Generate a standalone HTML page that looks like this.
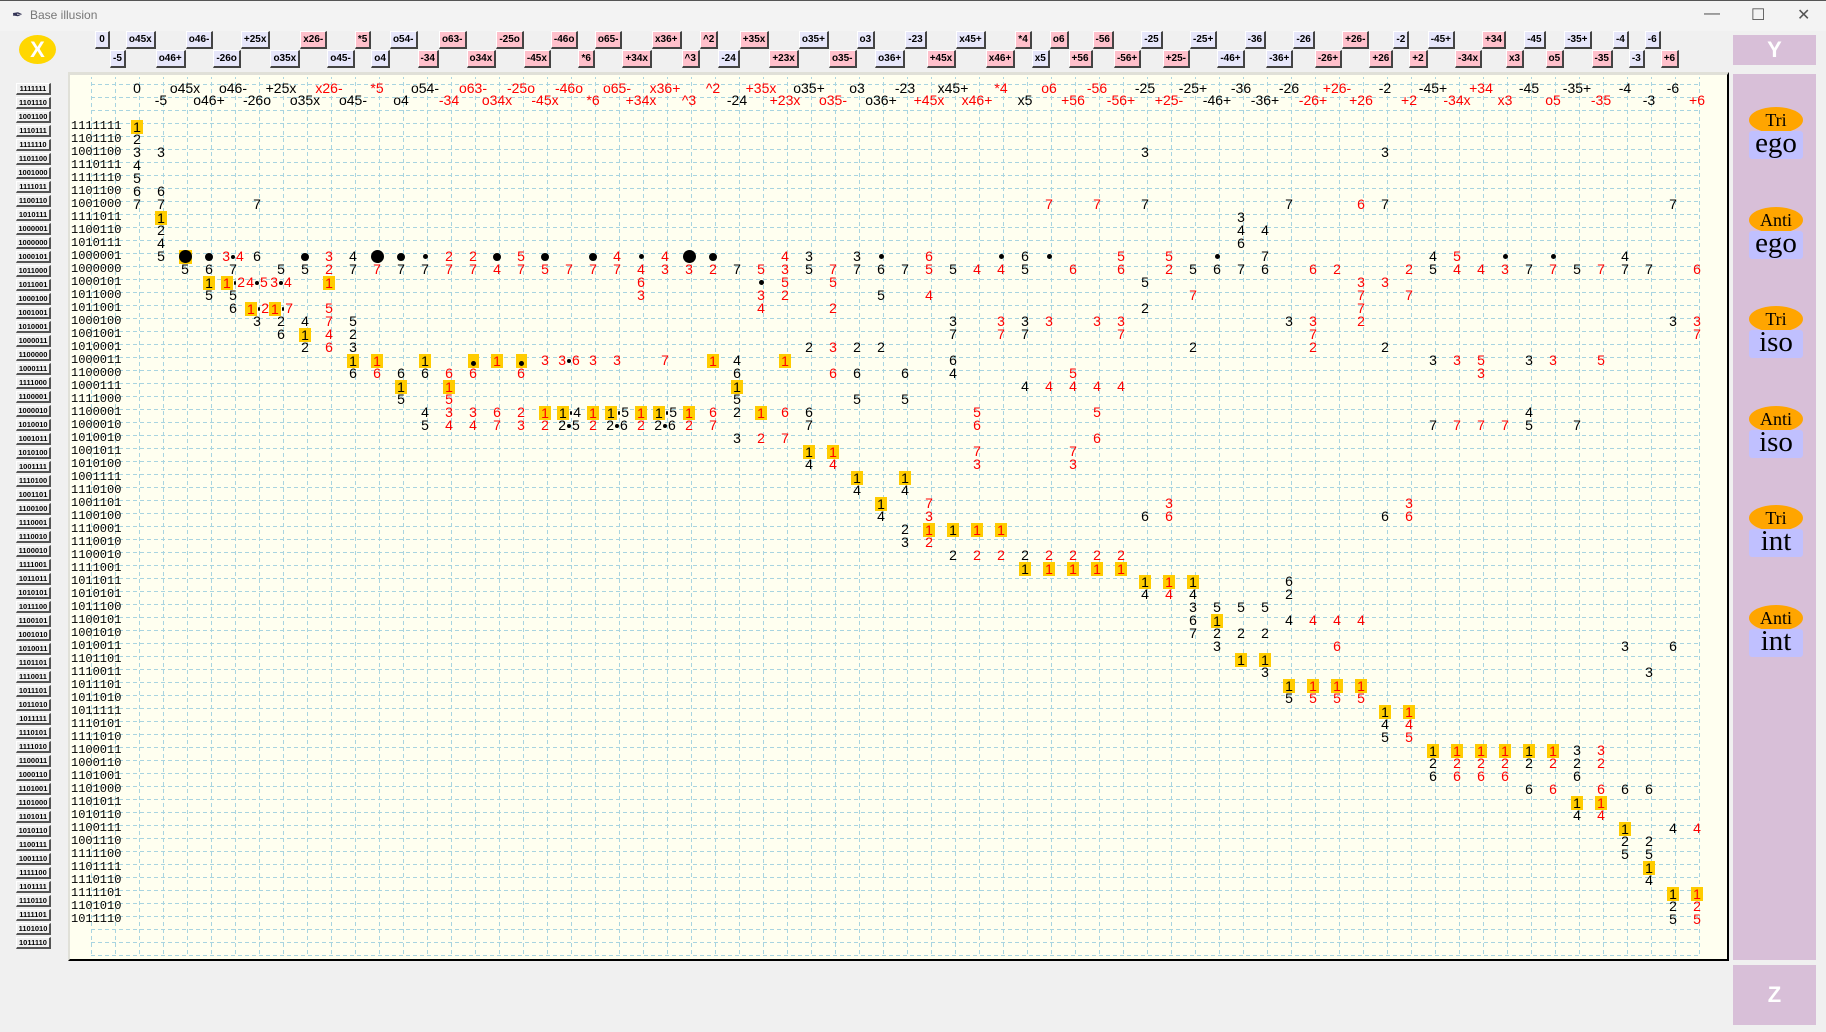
<!DOCTYPE html>
<html><head><meta charset="utf-8"><style>
*{margin:0;padding:0;box-sizing:border-box}
body{width:1826px;height:1032px;background:#f0f0f0;font-family:"Liberation Sans",sans-serif;position:relative;overflow:hidden}
#tb{position:absolute;left:0;top:0;width:1826px;height:31px;background:#f3f3f3;border-top:1px solid #555}
#tb .t{position:absolute;left:30px;top:7px;font-size:12px;color:#777}
#tb .c{position:absolute;top:4px;font-size:16px;color:#555}
#xb{position:absolute;left:19px;top:35px;width:37px;height:29px;border-radius:50%;background:#ffd700;color:#fff;font-weight:bold;font-size:22px;text-align:center;line-height:29px}
#btns{position:absolute;left:95px;top:31px;display:flex;align-items:flex-start}
#btns span{display:block;height:18px;font-size:10px;font-weight:bold;line-height:16px;padding:0 2px;background:#e6e6fa;border:1px solid #fff;border-right:2px solid #444;border-bottom:2px solid #444;white-space:nowrap;min-width:15px;text-align:center}
#btns span.p{background:#ffc0cb}
#btns span:nth-child(even){margin-top:19px}
#lb{position:absolute;left:16px;top:83px}
#lb div{width:35px;height:12px;margin-bottom:2px;font-size:7.5px;font-weight:bold;line-height:10px;text-align:center;background:#f0f0f0;border:1px solid #fff;border-right:2px solid #555;border-bottom:2px solid #555}
#cv{position:absolute;left:68px;top:72px;width:1661px;height:889px;background:#fffff0;border-top:3px solid #e0e0d8;border-left:2px solid #e0e0d8;border-right:2px solid #000;border-bottom:2px solid #000;overflow:hidden}
#cv svg{position:absolute;left:0;top:0}
#rl{position:absolute;left:71px;top:120px;font-family:"Liberation Mono",monospace;font-size:12px;line-height:13px;color:#000}
.g{position:absolute;left:125px;top:120px;display:grid;grid-template-columns:repeat(66,24px);grid-template-rows:repeat(62,13px);font-size:14px;line-height:13px}
.g b{font-weight:normal;display:flex;align-items:center;justify-content:center;white-space:nowrap;color:#000}
.g b.r,.hd .r{color:#f00}
.g s{text-decoration:none;background:#ffcc00;display:inline-block;padding:0 2px;line-height:14px;height:14px}
.g i{display:inline-block;width:8px;height:8px;border-radius:50%;background:#000}
.g i.b{width:13px;height:13px}
.g i.s{width:5px;height:5px}
.g i.t{width:4px;height:4px;margin:0 1px;vertical-align:middle}
.hd{position:absolute;left:125px;top:82px;display:grid;grid-template-columns:repeat(66,24px);grid-template-rows:12px 12px;font-size:14px;line-height:12px}
.hd b{font-weight:normal;display:flex;justify-content:center;white-space:nowrap;overflow:visible;width:24px}
#rp{position:absolute;left:1733px;top:74px;width:83px;height:886px;background:#d8bfd8}
#yb,#zb{position:absolute;left:1733px;width:83px;background:#d8bfd8;color:#fff;font-weight:bold;font-size:22px;text-align:center}
#yb{top:35px;height:30px;line-height:30px}
#zb{top:965px;height:60px;line-height:60px}
.og{position:absolute;left:1749px;width:54px}
.og .e{height:26px;border-radius:50%;background:#ffa500;font-family:"Liberation Serif",serif;font-size:18px;text-align:center;line-height:26px}
.og .w{height:28px;margin-top:-2px;background:#c0c0ff;border-radius:3px;font-family:"Liberation Serif",serif;font-size:29px;text-align:center;line-height:24px}
</style></head><body>
<div id="tb"><span style="position:absolute;left:12px;top:6px;font-size:13px;color:#335">&#10002;</span><span class="t">Base illusion</span><span class="c" style="left:1704px">&#8212;</span><span class="c" style="left:1751px">&#9744;</span><span class="c" style="left:1797px">&#10005;</span></div>
<div id="xb">X</div>
<div id="btns"><span>0</span><span>-5</span><span>o45x</span><span>o46+</span><span>o46-</span><span>-26o</span><span>+25x</span><span>o35x</span><span class="p">x26-</span><span>o45-</span><span class="p">*5</span><span>o4</span><span>o54-</span><span class="p">-34</span><span class="p">o63-</span><span class="p">o34x</span><span class="p">-25o</span><span class="p">-45x</span><span class="p">-46o</span><span class="p">*6</span><span class="p">o65-</span><span class="p">+34x</span><span class="p">x36+</span><span class="p">^3</span><span class="p">^2</span><span>-24</span><span class="p">+35x</span><span class="p">+23x</span><span>o35+</span><span class="p">o35-</span><span>o3</span><span>o36+</span><span>-23</span><span class="p">+45x</span><span>x45+</span><span class="p">x46+</span><span class="p">*4</span><span>x5</span><span class="p">o6</span><span class="p">+56</span><span class="p">-56</span><span class="p">-56+</span><span>-25</span><span class="p">+25-</span><span>-25+</span><span>-46+</span><span>-36</span><span>-36+</span><span>-26</span><span class="p">-26+</span><span class="p">+26-</span><span class="p">+26</span><span>-2</span><span class="p">+2</span><span>-45+</span><span class="p">-34x</span><span class="p">+34</span><span class="p">x3</span><span>-45</span><span class="p">o5</span><span>-35+</span><span class="p">-35</span><span>-4</span><span>-3</span><span>-6</span><span class="p">+6</span></div>
<div id="lb"><div>1111111</div><div>1101110</div><div>1001100</div><div>1110111</div><div>1111110</div><div>1101100</div><div>1001000</div><div>1111011</div><div>1100110</div><div>1010111</div><div>1000001</div><div>1000000</div><div>1000101</div><div>1011000</div><div>1011001</div><div>1000100</div><div>1001001</div><div>1010001</div><div>1000011</div><div>1100000</div><div>1000111</div><div>1111000</div><div>1100001</div><div>1000010</div><div>1010010</div><div>1001011</div><div>1010100</div><div>1001111</div><div>1110100</div><div>1001101</div><div>1100100</div><div>1110001</div><div>1110010</div><div>1100010</div><div>1111001</div><div>1011011</div><div>1010101</div><div>1011100</div><div>1100101</div><div>1001010</div><div>1010011</div><div>1101101</div><div>1110011</div><div>1011101</div><div>1011010</div><div>1011111</div><div>1110101</div><div>1111010</div><div>1100011</div><div>1000110</div><div>1101001</div><div>1101000</div><div>1101011</div><div>1010110</div><div>1100111</div><div>1001110</div><div>1111100</div><div>1101111</div><div>1110110</div><div>1111101</div><div>1101010</div><div>1011110</div></div>
<div id="cv"><svg width="1661" height="889"><defs>
<pattern id="pv" x="-3" y="0" width="24" height="889" patternUnits="userSpaceOnUse"><line x1="0.5" y1="0" x2="0.5" y2="889" stroke="#a8d4e0" stroke-dasharray="4 3"/></pattern>
<pattern id="ph" x="0" y="-4" width="1661" height="13" patternUnits="userSpaceOnUse"><line x1="0" y1="0.5" x2="1661" y2="0.5" stroke="#a8d4e0" stroke-dasharray="4 3"/></pattern>
</defs>
<rect x="20" y="2" width="1610" height="880" fill="url(#pv)"/>
<rect x="20" y="4" width="1610" height="878" fill="url(#ph)"/>
</svg></div>
<div id="rl">1111111<br>1101110<br>1001100<br>1110111<br>1111110<br>1101100<br>1001000<br>1111011<br>1100110<br>1010111<br>1000001<br>1000000<br>1000101<br>1011000<br>1011001<br>1000100<br>1001001<br>1010001<br>1000011<br>1100000<br>1000111<br>1111000<br>1100001<br>1000010<br>1010010<br>1001011<br>1010100<br>1001111<br>1110100<br>1001101<br>1100100<br>1110001<br>1110010<br>1100010<br>1111001<br>1011011<br>1010101<br>1011100<br>1100101<br>1001010<br>1010011<br>1101101<br>1110011<br>1011101<br>1011010<br>1011111<br>1110101<br>1111010<br>1100011<br>1000110<br>1101001<br>1101000<br>1101011<br>1010110<br>1100111<br>1001110<br>1111100<br>1101111<br>1110110<br>1111101<br>1101010<br>1011110</div>
<div class="hd">
<b style="grid-area:1/1">0</b><b style="grid-area:2/2">-5</b><b style="grid-area:1/3">o45x</b><b style="grid-area:2/4">o46+</b><b style="grid-area:1/5">o46-</b><b style="grid-area:2/6">-26o</b><b style="grid-area:1/7">+25x</b><b style="grid-area:2/8">o35x</b><b class="r" style="grid-area:1/9">x26-</b><b style="grid-area:2/10">o45-</b><b class="r" style="grid-area:1/11">*5</b><b style="grid-area:2/12">o4</b><b style="grid-area:1/13">o54-</b><b class="r" style="grid-area:2/14">-34</b><b class="r" style="grid-area:1/15">o63-</b><b class="r" style="grid-area:2/16">o34x</b><b class="r" style="grid-area:1/17">-25o</b><b class="r" style="grid-area:2/18">-45x</b><b class="r" style="grid-area:1/19">-46o</b><b class="r" style="grid-area:2/20">*6</b><b class="r" style="grid-area:1/21">o65-</b><b class="r" style="grid-area:2/22">+34x</b><b class="r" style="grid-area:1/23">x36+</b><b class="r" style="grid-area:2/24">^3</b><b class="r" style="grid-area:1/25">^2</b><b style="grid-area:2/26">-24</b><b class="r" style="grid-area:1/27">+35x</b><b class="r" style="grid-area:2/28">+23x</b><b style="grid-area:1/29">o35+</b><b class="r" style="grid-area:2/30">o35-</b><b style="grid-area:1/31">o3</b><b style="grid-area:2/32">o36+</b><b style="grid-area:1/33">-23</b><b class="r" style="grid-area:2/34">+45x</b><b style="grid-area:1/35">x45+</b><b class="r" style="grid-area:2/36">x46+</b><b class="r" style="grid-area:1/37">*4</b><b style="grid-area:2/38">x5</b><b class="r" style="grid-area:1/39">o6</b><b class="r" style="grid-area:2/40">+56</b><b class="r" style="grid-area:1/41">-56</b><b class="r" style="grid-area:2/42">-56+</b><b style="grid-area:1/43">-25</b><b class="r" style="grid-area:2/44">+25-</b><b style="grid-area:1/45">-25+</b><b style="grid-area:2/46">-46+</b><b style="grid-area:1/47">-36</b><b style="grid-area:2/48">-36+</b><b style="grid-area:1/49">-26</b><b class="r" style="grid-area:2/50">-26+</b><b class="r" style="grid-area:1/51">+26-</b><b class="r" style="grid-area:2/52">+26</b><b style="grid-area:1/53">-2</b><b class="r" style="grid-area:2/54">+2</b><b style="grid-area:1/55">-45+</b><b class="r" style="grid-area:2/56">-34x</b><b class="r" style="grid-area:1/57">+34</b><b class="r" style="grid-area:2/58">x3</b><b style="grid-area:1/59">-45</b><b class="r" style="grid-area:2/60">o5</b><b style="grid-area:1/61">-35+</b><b class="r" style="grid-area:2/62">-35</b><b style="grid-area:1/63">-4</b><b style="grid-area:2/64">-3</b><b style="grid-area:1/65">-6</b><b class="r" style="grid-area:2/66">+6</b>
</div>
<div class="g">
<b style="grid-area:1/1"><s>1</s></b>
<b style="grid-area:2/1">2</b>
<b style="grid-area:3/1">3</b><b style="grid-area:3/2">3</b><b style="grid-area:3/43">3</b><b style="grid-area:3/53">3</b>
<b style="grid-area:4/1">4</b>
<b style="grid-area:5/1">5</b>
<b style="grid-area:6/1">6</b><b style="grid-area:6/2">6</b>
<b style="grid-area:7/1">7</b><b style="grid-area:7/2">7</b><b style="grid-area:7/6">7</b><b class="r" style="grid-area:7/39">7</b><b class="r" style="grid-area:7/41">7</b><b style="grid-area:7/43">7</b><b style="grid-area:7/49">7</b><b class="r" style="grid-area:7/52">6</b><b style="grid-area:7/53">7</b><b style="grid-area:7/65">7</b>
<b style="grid-area:8/2"><s>1</s></b><b style="grid-area:8/47">3</b>
<b style="grid-area:9/2">2</b><b style="grid-area:9/47">4</b><b style="grid-area:9/48">4</b>
<b style="grid-area:10/2">4</b><b style="grid-area:10/47">6</b>
<b style="grid-area:11/2">5</b><b style="grid-area:11/3"><s style="padding:0"><i class="b"></i></s></b><b style="grid-area:11/4"><i></i></b><b class="r" style="grid-area:11/5">3<i class="t"></i>4</b><b style="grid-area:11/6">6</b><b style="grid-area:11/8"><i></i></b><b class="r" style="grid-area:11/9">3</b><b style="grid-area:11/10">4</b><b style="grid-area:11/11"><i class="b"></i></b><b style="grid-area:11/12"><i></i></b><b style="grid-area:11/13"><i class="s"></i></b><b class="r" style="grid-area:11/14">2</b><b class="r" style="grid-area:11/15">2</b><b style="grid-area:11/16"><i></i></b><b class="r" style="grid-area:11/17">5</b><b style="grid-area:11/18"><i></i></b><b style="grid-area:11/20"><i></i></b><b class="r" style="grid-area:11/21">4</b><b style="grid-area:11/22"><i class="s"></i></b><b class="r" style="grid-area:11/23">4</b><b style="grid-area:11/24"><i class="b"></i></b><b style="grid-area:11/25"><i></i></b><b class="r" style="grid-area:11/28">4</b><b style="grid-area:11/29">3</b><b style="grid-area:11/31">3</b><b style="grid-area:11/32"><i class="s"></i></b><b class="r" style="grid-area:11/34">6</b><b style="grid-area:11/37"><i class="s"></i></b><b style="grid-area:11/38">6</b><b style="grid-area:11/39"><i class="s"></i></b><b class="r" style="grid-area:11/42">5</b><b class="r" style="grid-area:11/44">5</b><b style="grid-area:11/46"><i class="s"></i></b><b style="grid-area:11/48">7</b><b style="grid-area:11/55">4</b><b class="r" style="grid-area:11/56">5</b><b style="grid-area:11/58"><i class="s"></i></b><b style="grid-area:11/60"><i class="s"></i></b><b style="grid-area:11/63">4</b>
<b style="grid-area:12/3">5</b><b style="grid-area:12/4">6</b><b style="grid-area:12/5">7</b><b style="grid-area:12/7">5</b><b style="grid-area:12/8">5</b><b class="r" style="grid-area:12/9">2</b><b style="grid-area:12/10">7</b><b class="r" style="grid-area:12/11">7</b><b style="grid-area:12/12">7</b><b style="grid-area:12/13">7</b><b class="r" style="grid-area:12/14">7</b><b class="r" style="grid-area:12/15">7</b><b class="r" style="grid-area:12/16">4</b><b class="r" style="grid-area:12/17">7</b><b class="r" style="grid-area:12/18">5</b><b class="r" style="grid-area:12/19">7</b><b class="r" style="grid-area:12/20">7</b><b class="r" style="grid-area:12/21">7</b><b class="r" style="grid-area:12/22">4</b><b class="r" style="grid-area:12/23">3</b><b class="r" style="grid-area:12/24">3</b><b class="r" style="grid-area:12/25">2</b><b style="grid-area:12/26">7</b><b class="r" style="grid-area:12/27">5</b><b class="r" style="grid-area:12/28">3</b><b style="grid-area:12/29">5</b><b class="r" style="grid-area:12/30">7</b><b style="grid-area:12/31">7</b><b style="grid-area:12/32">6</b><b style="grid-area:12/33">7</b><b class="r" style="grid-area:12/34">5</b><b style="grid-area:12/35">5</b><b class="r" style="grid-area:12/36">4</b><b class="r" style="grid-area:12/37">4</b><b style="grid-area:12/38">5</b><b class="r" style="grid-area:12/40">6</b><b class="r" style="grid-area:12/42">6</b><b class="r" style="grid-area:12/44">2</b><b style="grid-area:12/45">5</b><b style="grid-area:12/46">6</b><b style="grid-area:12/47">7</b><b style="grid-area:12/48">6</b><b class="r" style="grid-area:12/50">6</b><b class="r" style="grid-area:12/51">2</b><b class="r" style="grid-area:12/54">2</b><b style="grid-area:12/55">5</b><b class="r" style="grid-area:12/56">4</b><b class="r" style="grid-area:12/57">4</b><b class="r" style="grid-area:12/58">3</b><b style="grid-area:12/59">7</b><b class="r" style="grid-area:12/60">7</b><b style="grid-area:12/61">5</b><b class="r" style="grid-area:12/62">7</b><b style="grid-area:12/63">7</b><b style="grid-area:12/64">7</b><b class="r" style="grid-area:12/66">6</b>
<b style="grid-area:13/4"><s>1</s></b><b class="r" style="grid-area:13/5"><s>1</s><i class="t"></i>2</b><b class="r" style="grid-area:13/6">4<i class="t"></i>5</b><b class="r" style="grid-area:13/7">3<i class="t"></i>4</b><b class="r" style="grid-area:13/9"><s>1</s></b><b class="r" style="grid-area:13/22">6</b><b style="grid-area:13/27"><i class="s"></i></b><b class="r" style="grid-area:13/28">5</b><b class="r" style="grid-area:13/30">5</b><b style="grid-area:13/43">5</b><b class="r" style="grid-area:13/52">3</b><b class="r" style="grid-area:13/53">3</b>
<b style="grid-area:14/4">5</b><b style="grid-area:14/5">5</b><b class="r" style="grid-area:14/22">3</b><b class="r" style="grid-area:14/27">3</b><b class="r" style="grid-area:14/28">2</b><b style="grid-area:14/32">5</b><b class="r" style="grid-area:14/34">4</b><b class="r" style="grid-area:14/45">7</b><b class="r" style="grid-area:14/52">7</b><b class="r" style="grid-area:14/54">7</b>
<b style="grid-area:15/5">6</b><b class="r" style="grid-area:15/6"><s>1</s><i class="t"></i>2</b><b class="r" style="grid-area:15/7"><s>1</s><i class="t"></i>7</b><b class="r" style="grid-area:15/9">5</b><b class="r" style="grid-area:15/27">4</b><b class="r" style="grid-area:15/30">2</b><b style="grid-area:15/43">2</b><b class="r" style="grid-area:15/52">7</b>
<b style="grid-area:16/6">3</b><b style="grid-area:16/7">2</b><b style="grid-area:16/8">4</b><b class="r" style="grid-area:16/9">7</b><b style="grid-area:16/10">5</b><b style="grid-area:16/35">3</b><b class="r" style="grid-area:16/37">3</b><b style="grid-area:16/38">3</b><b class="r" style="grid-area:16/39">3</b><b class="r" style="grid-area:16/41">3</b><b class="r" style="grid-area:16/42">3</b><b style="grid-area:16/49">3</b><b class="r" style="grid-area:16/50">3</b><b class="r" style="grid-area:16/52">2</b><b style="grid-area:16/65">3</b><b class="r" style="grid-area:16/66">3</b>
<b style="grid-area:17/7">6</b><b style="grid-area:17/8"><s>1</s></b><b class="r" style="grid-area:17/9">4</b><b style="grid-area:17/10">2</b><b style="grid-area:17/35">7</b><b class="r" style="grid-area:17/37">7</b><b style="grid-area:17/38">7</b><b class="r" style="grid-area:17/42">7</b><b class="r" style="grid-area:17/50">7</b><b class="r" style="grid-area:17/66">7</b>
<b style="grid-area:18/8">2</b><b class="r" style="grid-area:18/9">6</b><b style="grid-area:18/10">3</b><b style="grid-area:18/29">2</b><b class="r" style="grid-area:18/30">3</b><b style="grid-area:18/31">2</b><b style="grid-area:18/32">2</b><b style="grid-area:18/45">2</b><b class="r" style="grid-area:18/50">2</b><b style="grid-area:18/53">2</b>
<b style="grid-area:19/10"><s>1</s></b><b class="r" style="grid-area:19/11"><s>1</s></b><b style="grid-area:19/13"><s>1</s></b><b style="grid-area:19/15"><s style="padding:0 3px"><i class="s"></i></s></b><b class="r" style="grid-area:19/16"><s>1</s></b><b style="grid-area:19/17"><s style="padding:0 3px"><i class="s"></i></s></b><b class="r" style="grid-area:19/18">3</b><b class="r" style="grid-area:19/19">3<i class="t"></i>6</b><b class="r" style="grid-area:19/20">3</b><b class="r" style="grid-area:19/21">3</b><b class="r" style="grid-area:19/23">7</b><b class="r" style="grid-area:19/25"><s>1</s></b><b style="grid-area:19/26">4</b><b class="r" style="grid-area:19/28"><s>1</s></b><b style="grid-area:19/35">6</b><b style="grid-area:19/55">3</b><b class="r" style="grid-area:19/56">3</b><b class="r" style="grid-area:19/57">5</b><b style="grid-area:19/59">3</b><b class="r" style="grid-area:19/60">3</b><b class="r" style="grid-area:19/62">5</b>
<b style="grid-area:20/10">6</b><b class="r" style="grid-area:20/11">6</b><b style="grid-area:20/12">6</b><b style="grid-area:20/13">6</b><b class="r" style="grid-area:20/14">6</b><b class="r" style="grid-area:20/15">6</b><b class="r" style="grid-area:20/17">6</b><b style="grid-area:20/26">6</b><b class="r" style="grid-area:20/30">6</b><b style="grid-area:20/31">6</b><b style="grid-area:20/33">6</b><b style="grid-area:20/35">4</b><b class="r" style="grid-area:20/40">5</b><b class="r" style="grid-area:20/57">3</b>
<b style="grid-area:21/12"><s>1</s></b><b class="r" style="grid-area:21/14"><s>1</s></b><b style="grid-area:21/26"><s>1</s></b><b style="grid-area:21/38">4</b><b class="r" style="grid-area:21/39">4</b><b class="r" style="grid-area:21/40">4</b><b class="r" style="grid-area:21/41">4</b><b class="r" style="grid-area:21/42">4</b>
<b style="grid-area:22/12">5</b><b class="r" style="grid-area:22/14">5</b><b style="grid-area:22/26">5</b><b style="grid-area:22/31">5</b><b style="grid-area:22/33">5</b>
<b style="grid-area:23/13">4</b><b class="r" style="grid-area:23/14">3</b><b class="r" style="grid-area:23/15">3</b><b class="r" style="grid-area:23/16">6</b><b class="r" style="grid-area:23/17">2</b><b class="r" style="grid-area:23/18"><s>1</s></b><b style="grid-area:23/19"><s>1</s><i class="t"></i>4</b><b class="r" style="grid-area:23/20"><s>1</s></b><b style="grid-area:23/21"><s>1</s><i class="t"></i>5</b><b class="r" style="grid-area:23/22"><s>1</s></b><b style="grid-area:23/23"><s>1</s><i class="t"></i>5</b><b class="r" style="grid-area:23/24"><s>1</s></b><b class="r" style="grid-area:23/25">6</b><b style="grid-area:23/26">2</b><b class="r" style="grid-area:23/27"><s>1</s></b><b class="r" style="grid-area:23/28">6</b><b style="grid-area:23/29">6</b><b class="r" style="grid-area:23/36">5</b><b class="r" style="grid-area:23/41">5</b><b style="grid-area:23/59">4</b>
<b style="grid-area:24/13">5</b><b class="r" style="grid-area:24/14">4</b><b class="r" style="grid-area:24/15">4</b><b class="r" style="grid-area:24/16">7</b><b class="r" style="grid-area:24/17">3</b><b class="r" style="grid-area:24/18">2</b><b style="grid-area:24/19">2<i class="t"></i>5</b><b class="r" style="grid-area:24/20">2</b><b style="grid-area:24/21">2<i class="t"></i>6</b><b class="r" style="grid-area:24/22">2</b><b style="grid-area:24/23">2<i class="t"></i>6</b><b class="r" style="grid-area:24/24">2</b><b class="r" style="grid-area:24/25">7</b><b style="grid-area:24/29">7</b><b class="r" style="grid-area:24/36">6</b><b style="grid-area:24/55">7</b><b class="r" style="grid-area:24/56">7</b><b class="r" style="grid-area:24/57">7</b><b class="r" style="grid-area:24/58">7</b><b style="grid-area:24/59">5</b><b style="grid-area:24/61">7</b>
<b style="grid-area:25/26">3</b><b class="r" style="grid-area:25/27">2</b><b class="r" style="grid-area:25/28">7</b><b class="r" style="grid-area:25/41">6</b>
<b style="grid-area:26/29"><s>1</s></b><b class="r" style="grid-area:26/30"><s>1</s></b><b class="r" style="grid-area:26/36">7</b><b class="r" style="grid-area:26/40">7</b>
<b style="grid-area:27/29">4</b><b class="r" style="grid-area:27/30">4</b><b class="r" style="grid-area:27/36">3</b><b class="r" style="grid-area:27/40">3</b>
<b style="grid-area:28/31"><s>1</s></b><b style="grid-area:28/33"><s>1</s></b>
<b style="grid-area:29/31">4</b><b style="grid-area:29/33">4</b>
<b style="grid-area:30/32"><s>1</s></b><b class="r" style="grid-area:30/34">7</b><b class="r" style="grid-area:30/44">3</b><b class="r" style="grid-area:30/54">3</b>
<b style="grid-area:31/32">4</b><b class="r" style="grid-area:31/34">3</b><b style="grid-area:31/43">6</b><b class="r" style="grid-area:31/44">6</b><b style="grid-area:31/53">6</b><b class="r" style="grid-area:31/54">6</b>
<b style="grid-area:32/33">2</b><b class="r" style="grid-area:32/34"><s>1</s></b><b style="grid-area:32/35"><s>1</s></b><b class="r" style="grid-area:32/36"><s>1</s></b><b class="r" style="grid-area:32/37"><s>1</s></b>
<b style="grid-area:33/33">3</b><b class="r" style="grid-area:33/34">2</b>
<b style="grid-area:34/35">2</b><b class="r" style="grid-area:34/36">2</b><b class="r" style="grid-area:34/37">2</b><b style="grid-area:34/38">2</b><b class="r" style="grid-area:34/39">2</b><b class="r" style="grid-area:34/40">2</b><b class="r" style="grid-area:34/41">2</b><b class="r" style="grid-area:34/42">2</b>
<b style="grid-area:35/38"><s>1</s></b><b class="r" style="grid-area:35/39"><s>1</s></b><b class="r" style="grid-area:35/40"><s>1</s></b><b class="r" style="grid-area:35/41"><s>1</s></b><b class="r" style="grid-area:35/42"><s>1</s></b>
<b style="grid-area:36/43"><s>1</s></b><b class="r" style="grid-area:36/44"><s>1</s></b><b style="grid-area:36/45"><s>1</s></b><b style="grid-area:36/49">6</b>
<b style="grid-area:37/43">4</b><b class="r" style="grid-area:37/44">4</b><b style="grid-area:37/45">4</b><b style="grid-area:37/49">2</b>
<b style="grid-area:38/45">3</b><b style="grid-area:38/46">5</b><b style="grid-area:38/47">5</b><b style="grid-area:38/48">5</b>
<b style="grid-area:39/45">6</b><b style="grid-area:39/46"><s>1</s></b><b style="grid-area:39/49">4</b><b class="r" style="grid-area:39/50">4</b><b class="r" style="grid-area:39/51">4</b><b class="r" style="grid-area:39/52">4</b>
<b style="grid-area:40/45">7</b><b style="grid-area:40/46">2</b><b style="grid-area:40/47">2</b><b style="grid-area:40/48">2</b>
<b style="grid-area:41/46">3</b><b class="r" style="grid-area:41/51">6</b><b style="grid-area:41/63">3</b><b style="grid-area:41/65">6</b>
<b style="grid-area:42/47"><s>1</s></b><b style="grid-area:42/48"><s>1</s></b>
<b style="grid-area:43/48">3</b><b style="grid-area:43/64">3</b>
<b style="grid-area:44/49"><s>1</s></b><b class="r" style="grid-area:44/50"><s>1</s></b><b class="r" style="grid-area:44/51"><s>1</s></b><b class="r" style="grid-area:44/52"><s>1</s></b>
<b style="grid-area:45/49">5</b><b class="r" style="grid-area:45/50">5</b><b class="r" style="grid-area:45/51">5</b><b class="r" style="grid-area:45/52">5</b>
<b style="grid-area:46/53"><s>1</s></b><b class="r" style="grid-area:46/54"><s>1</s></b>
<b style="grid-area:47/53">4</b><b class="r" style="grid-area:47/54">4</b>
<b style="grid-area:48/53">5</b><b class="r" style="grid-area:48/54">5</b>
<b style="grid-area:49/55"><s>1</s></b><b class="r" style="grid-area:49/56"><s>1</s></b><b class="r" style="grid-area:49/57"><s>1</s></b><b class="r" style="grid-area:49/58"><s>1</s></b><b style="grid-area:49/59"><s>1</s></b><b class="r" style="grid-area:49/60"><s>1</s></b><b style="grid-area:49/61">3</b><b class="r" style="grid-area:49/62">3</b>
<b style="grid-area:50/55">2</b><b class="r" style="grid-area:50/56">2</b><b class="r" style="grid-area:50/57">2</b><b class="r" style="grid-area:50/58">2</b><b style="grid-area:50/59">2</b><b class="r" style="grid-area:50/60">2</b><b style="grid-area:50/61">2</b><b class="r" style="grid-area:50/62">2</b>
<b style="grid-area:51/55">6</b><b class="r" style="grid-area:51/56">6</b><b class="r" style="grid-area:51/57">6</b><b class="r" style="grid-area:51/58">6</b><b style="grid-area:51/61">6</b>
<b style="grid-area:52/59">6</b><b class="r" style="grid-area:52/60">6</b><b class="r" style="grid-area:52/62">6</b><b style="grid-area:52/63">6</b><b style="grid-area:52/64">6</b>
<b style="grid-area:53/61"><s>1</s></b><b class="r" style="grid-area:53/62"><s>1</s></b>
<b style="grid-area:54/61">4</b><b class="r" style="grid-area:54/62">4</b>
<b style="grid-area:55/63"><s>1</s></b><b style="grid-area:55/65">4</b><b class="r" style="grid-area:55/66">4</b>
<b style="grid-area:56/63">2</b><b style="grid-area:56/64">2</b>
<b style="grid-area:57/63">5</b><b style="grid-area:57/64">5</b>
<b style="grid-area:58/64"><s>1</s></b>
<b style="grid-area:59/64">4</b>
<b style="grid-area:60/65"><s>1</s></b><b class="r" style="grid-area:60/66"><s>1</s></b>
<b style="grid-area:61/65">2</b><b class="r" style="grid-area:61/66">2</b>
<b style="grid-area:62/65">5</b><b class="r" style="grid-area:62/66">5</b>
</div>
<div id="yb">Y</div>
<div id="rp"></div>
<div class="og" style="top:107px"><div class="e">Tri</div><div class="w">ego</div></div>
<div class="og" style="top:207px"><div class="e">Anti</div><div class="w">ego</div></div>
<div class="og" style="top:306px"><div class="e">Tri</div><div class="w">iso</div></div>
<div class="og" style="top:406px"><div class="e">Anti</div><div class="w">iso</div></div>
<div class="og" style="top:505px"><div class="e">Tri</div><div class="w">int</div></div>
<div class="og" style="top:605px"><div class="e">Anti</div><div class="w">int</div></div>
<div id="zb">Z</div>
</body></html>
